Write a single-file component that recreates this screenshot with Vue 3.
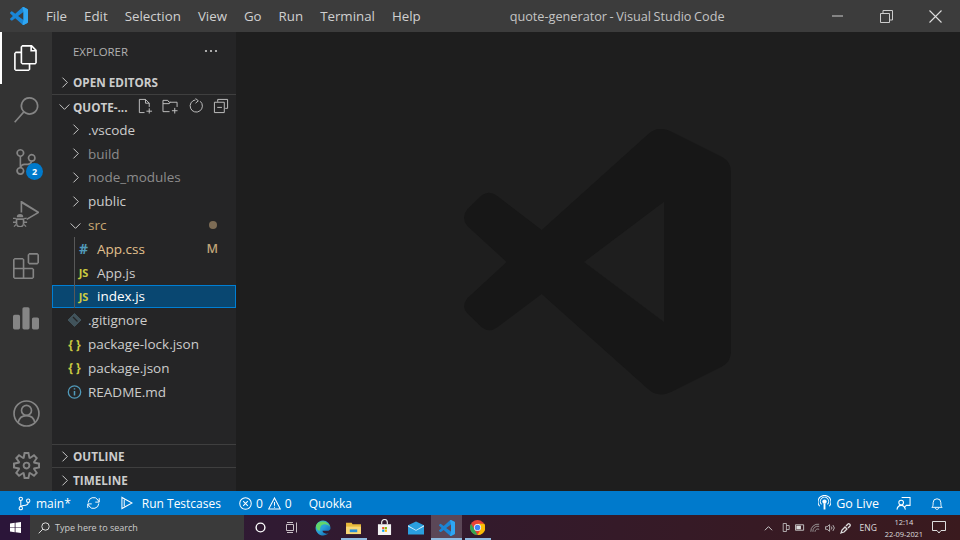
<script setup>
const menus = ['File','Edit','Selection','View','Go','Run','Terminal','Help']
const logo = 'M625 72Q655 45 695 65L845 140Q873 155 873 185L873 725Q873 755 845 770L695 845Q655 865 625 838L305 552L172 652Q148 670 125 652L82 610Q62 590 82 565L200 456L82 348Q62 322 82 298L125 256Q148 240 172 258L305 360ZM672 275L432 456L672 636Z'
const logoBand = 'M625 72Q655 45 695 65L845 140Q873 155 873 185V725Q873 755 845 770L695 845Q655 865 625 838L672 636V275Z'
const topIcons = [
  { name:'files', active:true, d:'M17.5 0h-9L7 1.5V6H2.5L1 7.5v15.07L2.5 24h12.07L16 22.57V18h4.7l1.3-1.43V4.5L17.5 0zm0 2.12l2.38 2.38H17.5V2.12zm-3 20.38h-12v-15H7v9.07L8.5 18h6v4.5zm6-6h-12v-15H16V6h4.5v10.5z' },
  { name:'search', d:'M15.25 0a8.25 8.25 0 0 0-6.18 13.72L1 22.88l1.12 1 8.05-9.12A8.251 8.251 0 1 0 15.25.01V0zm0 15a6.75 6.75 0 1 1 0-13.5 6.75 6.75 0 0 1 0 13.5z' },
  { name:'scm', badge:'2', d:'M21.007 8.222A3.738 3.738 0 0 0 15.045 5.2a3.737 3.737 0 0 0 1.156 6.583 2.988 2.988 0 0 1-2.668 1.67h-2.99a4.456 4.456 0 0 0-2.989 1.165V7.4a3.737 3.737 0 1 0-1.494 0v9.117a3.776 3.776 0 1 0 1.816.099 2.99 2.99 0 0 1 2.668-1.667h2.99a4.484 4.484 0 0 0 4.223-3.039 3.736 3.736 0 0 0 3.25-3.687zM4.565 3.738a2.242 2.242 0 1 1 4.484 0 2.242 2.242 0 0 1-4.484 0zm4.484 16.441a2.242 2.242 0 1 1-4.484 0 2.242 2.242 0 0 1 4.484 0zm8.221-9.715a2.242 2.242 0 1 1 0-4.485 2.242 2.242 0 0 1 0 4.485z' },
  { name:'debug', d:'M7 0h1.200L24 10v1L13 17.500l-.8-1.200L22 10.500 8.500 2.500V10.500H7zM2.500 16h8v4.500a4 4 0 0 1-8 0zM4 17.500v3a2.500 2.500 0 0 0 5 0v-3zM3.500 15a3 3 0 0 1 6 0zM0 15.500h2.500v1.200H0zM10.500 15.500H13v1.200h-2.500zM0 19h2.500v1.200H0zM10.500 19H13v1.200h-2.500zM.5 23.200l2-2 .8.8-2 2zM12.500 23.200l-2-2-.8.8 2 2z' },
  { name:'ext', d:'M13.5 1.5L15 0h7.5L24 1.5V9l-1.5 1.5H15L13.5 9V1.5zm1.5 0V9h7.5V1.5H15zM0 15V6l1.5-1.5H9L10.5 6v7.5H18l1.5 1.5v7.5L18 24H1.5L0 22.5V15zm9-1.5V6H1.5v7.5H9zM9 15H1.5v7.5H9V15zm1.5 7.5H18V15h-7.5v7.5z' },
  { name:'charts', d:'M1.500 9h3.500a1.500 1.500 0 0 1 1.500 1.500V21a1.500 1.500 0 0 1-1.500 1.500H1.500A1.500 1.500 0 0 1 0 21V10.500A1.500 1.500 0 0 1 1.500 9zM10.200 2h3.600a1.500 1.500 0 0 1 1.500 1.500V21a1.500 1.500 0 0 1-1.500 1.500h-3.600A1.500 1.500 0 0 1 8.700 21V3.500A1.500 1.500 0 0 1 10.200 2zM19 11.500h3.500a1.500 1.500 0 0 1 1.500 1.500v8a1.500 1.500 0 0 1-1.500 1.500H19a1.500 1.500 0 0 1-1.500-1.500v-8a1.500 1.500 0 0 1 1.500-1.500z' },
]
const gear = 'M19.85 8.75l4.15.83v4.84l-4.15.83 2.35 3.52-3.43 3.43-3.52-2.35-.83 4.15H9.58l-.83-4.15-3.52 2.35-3.43-3.43 2.35-3.52L0 14.42V9.58l4.15-.83L1.8 5.23 5.23 1.8l3.52 2.35L9.58 0h4.84l.83 4.15 3.52-2.35 3.43 3.43-2.35 3.52zm-1.57 5.07l4-.81v-2l-4-.81-.54-1.3 2.29-3.43-1.43-1.43-3.43 2.29-1.3-.54-.81-4h-2l-.81 4-1.3.54-3.43-2.29-1.43 1.43L6.38 8.9l-.54 1.3-4 .81v2l4 .81.54 1.3-2.29 3.43 1.43 1.43 3.43-2.29 1.3.54.81 4h2l.81-4 1.3-.54 3.43 2.29 1.43-1.43-2.29-3.43.54-1.3zm-8.186-4.672A3.43 3.43 0 0 1 12 8.57 3.44 3.44 0 0 1 15.43 12a3.43 3.43 0 1 1-5.336-2.852zm.956 4.274c.281.188.612.288.95.288A1.7 1.7 0 0 0 13.71 12a1.71 1.71 0 1 0-2.66 1.422z'
const tree = [
  { label:'.vscode', kind:'closed', cls:'' },
  { label:'build', kind:'closed', cls:'dim' },
  { label:'node_modules', kind:'closed', cls:'dim' },
  { label:'public', kind:'closed', cls:'' },
  { label:'src', kind:'open', cls:'mod', dot:true },
  { label:'App.css', kind:'child', icon:'#', iconCls:'hash', cls:'modfile', status:'M' },
  { label:'App.js', kind:'child', icon:'JS', iconCls:'js', cls:'' },
  { label:'index.js', kind:'child', icon:'JS', iconCls:'js', cls:'sel' },
  { label:'.gitignore', kind:'git', cls:'' },
  { label:'package-lock.json', kind:'file', icon:'{ }', iconCls:'json', cls:'' },
  { label:'package.json', kind:'file', icon:'{ }', iconCls:'json', cls:'' },
  { label:'README.md', kind:'info', cls:'' },
]
const hasChevron = k => k === 'closed' || k === 'open'
</script>

<template>
  <div class="app">
    <header class="titlebar">
      <svg class="vs-logo" viewBox="72 57 801 798"><path :d="logo" fill="#1a86d6" fill-rule="evenodd"/><path :d="logoBand" fill="#2fa6f2"/></svg>
      <nav class="menu"><span v-for="m in menus" :key="m" class="menu-item">{{ m }}</span></nav>
      <div class="win-title">quote-generator - Visual Studio Code</div>
      <div class="win-ctrls">
        <span class="win-btn"><svg width="12" height="12" viewBox="0 0 12 12"><path d="M0 6h11" stroke="#ccc" fill="none"/></svg></span>
        <span class="win-btn"><svg width="13" height="13" viewBox="0 0 13 13"><path d="M.5 3.500h9v9h-9zM3 3.500V.5h9.500v9.500H9.500" stroke="#ccc" fill="none"/></svg></span>
        <span class="win-btn"><svg width="13" height="13" viewBox="0 0 13 13"><path d="M.5.5l12 12M12.500.5l-12 12" stroke="#ddd" fill="none" stroke-width="1.100"/></svg></span>
      </div>
    </header>

    <div class="workbench">
      <aside class="activity">
        <div v-for="i in topIcons" :key="i.name" class="act" :class="{ active: i.active }">
          <svg width="26" height="26" viewBox="0 0 24 24"><path :d="i.d" fill="currentColor" fill-rule="evenodd"/></svg>
          <span v-if="i.badge" class="badge">{{ i.badge }}</span>
        </div>
        <div class="act-spacer"></div>
        <div class="act">
          <svg width="27" height="27" viewBox="0 0 26 26" fill="none" stroke="currentColor" stroke-width="1.600"><circle cx="13" cy="13" r="12"/><circle cx="13" cy="10" r="4.800"/><path d="M5 21.500c1-4.500 4-6.500 8-6.500s7 2 8 6.500"/></svg>
        </div>
        <div class="act">
          <svg width="27" height="27" viewBox="0 0 24 24"><path :d="gear" fill="currentColor" fill-rule="evenodd"/></svg>
        </div>
      </aside>

      <section class="sidebar">
        <div class="side-head">
          <span>EXPLORER</span>
          <svg width="14" height="4" viewBox="0 0 14 4" fill="#ccc"><circle cx="2" cy="2" r="1.100"/><circle cx="7" cy="2" r="1.100"/><circle cx="12" cy="2" r="1.100"/></svg>
        </div>
        <div class="sec">
          <svg class="chev" viewBox="0 0 16 16"><path d="M5.500 2l6 6-6 6"/></svg>
          <span>OPEN EDITORS</span>
        </div>
        <div class="sec line">
          <svg class="chev" viewBox="0 0 16 16"><path d="M2 5.500l6 6 6-6"/></svg>
          <span class="proj">QUOTE-...</span>
          <span class="tools">
            <svg width="16" height="16" viewBox="0 0 17 17"><path d="M8 15.500H2.500v-14H9l4 4v4M9 1.500v4h4M13 11v5.500M10 14h6"/></svg>
            <svg width="17" height="16" viewBox="0 0 17 17"><path d="M7.500 14.500H.5v-12h5l1.500 2h8.500v5M.5 6h6.500l1.500-1.500M13 10.500v6M10 13.500h6"/></svg>
            <svg width="16" height="16" viewBox="0 0 17 17"><path d="M13 3.500a6.500 6.500 0 1 1-5-1.500M8 .5l3 2.500-3 2.500"/></svg>
            <svg width="16" height="16" viewBox="0 0 17 17"><path d="M5 4V1.500h10.500V11H13M1.500 4.500H12v11H1.500zM4.500 10h5"/></svg>
          </span>
        </div>
        <div class="tree">
          <div v-for="r in tree" :key="r.label" class="row" :class="[r.cls, r.kind]">
            <svg v-if="hasChevron(r.kind)" class="chev small" viewBox="0 0 16 16">
              <path :d="r.kind === 'open' ? 'M2 5.500l6 6 6-6' : 'M5.500 2l6 6-6 6'"/>
            </svg>
            <span v-if="r.kind === 'child' || r.kind === 'file'" class="ficon" :class="r.iconCls">{{ r.icon }}</span>
            <svg v-if="r.kind === 'git'" class="gitic" width="14" height="14" viewBox="0 0 14 14"><path d="M7 .5L13.500 7 7 13.500.5 7z" fill="#41535b" stroke="#41535b"/><path d="M5.500 4l4.500 4.500" stroke="#252526" stroke-width="1.300"/></svg>
            <svg v-if="r.kind === 'info'" class="infoic" width="14" height="14" viewBox="0 0 14 14" fill="none" stroke="#519aba" stroke-width="1.300"><circle cx="7" cy="7" r="6.200"/><path d="M7 6v4.500M7 3.200v1.400" stroke-width="1.500"/></svg>
            <span class="lbl">{{ r.label }}</span>
            <span v-if="r.dot" class="dot"></span>
            <span v-if="r.status" class="status">{{ r.status }}</span>
          </div>
          <span class="guide"></span>
        </div>
        <div class="sec line bottom">
          <svg class="chev" viewBox="0 0 16 16"><path d="M5.500 2l6 6-6 6"/></svg><span>OUTLINE</span>
        </div>
        <div class="sec line last">
          <svg class="chev" viewBox="0 0 16 16"><path d="M5.500 2l6 6-6 6"/></svg><span>TIMELINE</span>
        </div>
      </section>

      <main class="editor">
        <svg class="watermark" viewBox="72 57 801 798"><path :d="logo" fill="#171717" fill-rule="evenodd"/></svg>
      </main>
    </div>

    <footer class="statusbar">
      <div class="st-left">
        <span class="st branch"><svg width="13" height="15" viewBox="0 0 14 15" class="ic"><circle cx="3" cy="2.500" r="1.800"/><circle cx="3" cy="12.500" r="1.800"/><circle cx="11" cy="4.500" r="1.800"/><path d="M3 4.300v6.400M11 6.300c0 3-3 3.200-5 3.400-1.500.2-3 .7-3 1.800"/></svg>main*</span>
        <span class="st sync"><svg width="15" height="14" viewBox="0 0 17 15" class="ic"><path d="M2.500 7a6 6 0 0 1 11-3l1 2M14.500 8a6 6 0 0 1-11 3l-1-2M15 2v4.500h-4.500M2 13V8.500h4.500"/></svg></span>
        <span class="st run"><svg width="12" height="14" viewBox="0 0 13 14" class="ic"><path d="M1 1v12l11-6zM3.500 3.500v7"/></svg>Run Testcases</span>
        <span class="st problems"><svg width="13" height="13" viewBox="0 0 14 14" class="ic"><circle cx="7" cy="7" r="6.200"/><path d="M4.500 4.500l5 5M9.500 4.500l-5 5"/></svg>0<svg width="13" height="13" viewBox="0 0 14 14" class="ic warn"><path d="M7 1l6.300 12H.7z"/><path d="M7 5.500v4M7 10.500v1.200"/></svg>0</span>
        <span class="st quokka">Quokka</span>
      </div>
      <div class="st-right">
        <span class="st golive"><svg width="13" height="16" viewBox="0 0 14 16" class="ic"><circle cx="7" cy="6.500" r="1.800" fill="#fff"/><path d="M7 8.500V15" stroke-width="2"/><path d="M3.800 9.500a4.500 4.500 0 1 1 6.400 0M1.800 11.500a7 7 0 1 1 10.400 0"/></svg>Go Live</span>
        <span class="st feedback"><svg width="15" height="15" viewBox="0 0 16 15" class="ic"><path d="M6 1h9v8.500H11l-2 2"/><circle cx="5.500" cy="6.500" r="2.500"/><path d="M1 14c.5-3 2-4.500 4.500-4.500S9.500 11 10 14"/></svg></span>
        <span class="st bell"><svg width="12" height="15" viewBox="0 0 14 16" class="ic"><path d="M1 12.500c1.500-1 1.500-3 1.500-5.500a4.500 4.500 0 0 1 9 0c0 2.500 0 4.500 1.500 5.500zM5 13c0 2.500 4 2.500 4 0"/></svg></span>
      </div>
    </footer>

    <div class="taskbar">
      <div class="start"><svg width="11" height="11" viewBox="0 0 14 14" fill="#fff"><path d="M0 2l6-.9V6.600H0zM7 1l7-1v6.600H7zM0 7.400h6V13l-6-.9zM7 7.400h7V14l-7-1z"/></svg></div>
      <div class="searchbox">
        <svg width="12" height="12" viewBox="0 0 12 12" fill="none" stroke="#ddd"><circle cx="7.500" cy="4.500" r="3.700"/><path d="M4.800 7.200L.7 11.300"/></svg>
        <span>Type here to search</span>
      </div>
      <div class="tb"><svg width="11" height="11" viewBox="0 0 12 12" fill="none" stroke="#fff" stroke-width="1.500"><circle cx="6" cy="6" r="4.800"/></svg></div>
      <div class="tb"><svg width="12" height="11" viewBox="0 0 12 11" fill="none" stroke="#c9c0c6"><path d="M.5 2.500h7v6h-7zM1 .5h6M1 10.500h6M10.500.5v10"/></svg></div>
      <div class="tb"><svg width="16" height="16" viewBox="0 0 17 17"><defs><linearGradient id="eg" x1="0" y1="0" x2="1" y2="1"><stop offset="0" stop-color="#35c1c8"/><stop offset=".5" stop-color="#2a9fd8"/><stop offset="1" stop-color="#0b5fa8"/></linearGradient></defs><path d="M8.500.5a8 8 0 0 1 8 8c0 2-1.500 3-3.500 3H8c0 1.800 2 3 4 3 1 0 2-.2 2.500-.6A8 8 0 1 1 8.500.5z" fill="url(#eg)"/><path d="M1 6c1-3 4-4.500 7-4.500 4 0 7 2 8.300 6-1.300-2-4-3-6-3-4 0-5 3-4.800 7C3 11.500 1.300 9 1 6z" fill="#62d66a"/></svg></div>
      <div class="tb run-ind"><svg width="15" height="14" viewBox="0 0 16 15"><path d="M0 2h6l1 1.500h9V14H0z" fill="#e8b93b"/><path d="M0 6h16v8H0z" fill="#f8d775"/><path d="M4 9h8v3H4z" fill="#2a8fd8"/></svg></div>
      <div class="tb"><svg width="15" height="17" viewBox="0 0 16 17"><path d="M1 5h14v11.500H1z" fill="#f3f3f3"/><path d="M5 5V3a3 3 0 0 1 6 0v2" fill="none" stroke="#f3f3f3" stroke-width="1.200"/><path d="M5.500 8h2.300v2.300H5.500z" fill="#f25022"/><path d="M8.300 8h2.300v2.300H8.300z" fill="#7fba00"/><path d="M5.500 10.800h2.300v2.300H5.500z" fill="#00a4ef"/><path d="M8.300 10.800h2.300v2.300H8.300z" fill="#ffb900"/></svg></div>
      <div class="tb"><svg width="16" height="14" viewBox="0 0 17 14"><path d="M0 4l8.500-4L17 4v10H0z" fill="#2a9fe0"/><path d="M0 4l8.500 5L17 4v1.500L8.500 10 0 5.500z" fill="#d8f0fc"/></svg></div>
      <div class="tb current"><svg width="16" height="16" viewBox="72 57 801 798"><path :d="logo" fill="#1a86d6" fill-rule="evenodd"/><path :d="logoBand" fill="#2fa6f2"/></svg></div>
      <div class="tb run-ind"><svg width="15" height="15" viewBox="0 0 16 16"><circle cx="8" cy="8" r="8" fill="#ea4335"/><path d="M8 16A8 8 0 0 1 1.100 4L5 10.500l3 5.500z" fill="#34a853"/><path d="M8 4h7.300A8 8 0 0 1 8 16l3.300-6z" fill="#fbbc05"/><circle cx="8" cy="8" r="3.800" fill="#fff"/><circle cx="8" cy="8" r="3" fill="#4285f4"/></svg></div>
      <div class="tray">
        <svg class="tray-chev" width="9" height="6" viewBox="0 0 10 6" fill="none" stroke="#ddd"><path d="M1 5.500l4-4 4 4"/></svg>
        <svg width="8" height="11" viewBox="0 0 10 11" fill="none" stroke="#ccc"><path d="M1.500.5h4v10h-4zM5.500 3h3.500v5H5.500"/></svg>
        <svg width="10" height="7" viewBox="0 0 11 7"><path d="M.5.5h9v6h-9z" fill="none" stroke="#ccc"/><path d="M1.500 1.500h5v4h-5z" fill="#ddd"/></svg>
        <svg width="10" height="10" viewBox="0 0 12 10" fill="none" stroke="#aaa"><path d="M1 9.500a8.500 8.500 0 0 1 10-9M3.500 9.500a6 6 0 0 1 7.500-6.500M6 9.500a3.500 3.500 0 0 1 5-3"/></svg>
        <svg width="10" height="10" viewBox="0 0 12 10" fill="none" stroke="#ccc"><path d="M.5 3.500h2L5.500 1v8l-3-2.500h-2zM7.500 3.200a2.500 2.500 0 0 1 0 3.600M9.500 1.500a5 5 0 0 1 0 7"/></svg>
        <svg width="12" height="12" viewBox="0 0 12 12" fill="none" stroke="#ddd" stroke-width="1.300"><path d="M1 11l3-1 3-3-2-2-3 3zM6 4l2-2c1-1 3 1 2 2L8 6M5 5l2 2"/></svg>
        <span class="eng">ENG</span>
        <span class="clock"><span>12:14</span><span>22-09-2021</span></span>
        <svg class="notif" width="14" height="13" viewBox="0 0 14 13" fill="none" stroke="#ddd"><path d="M.5.5h13v9h-4.500L7 12 5 9.500H.5z"/></svg>
      </div>
    </div>
  </div>
</template>

<style scoped>
.app { width: 960px; height: 540px; display: flex; flex-direction: column; overflow: hidden; font-family: "Open Sans", "Noto Sans", sans-serif; color: #ccc; }

.titlebar { height: 32px; flex: none; background: #3c3c3c; display: flex; align-items: center; font-size: 13.300px; }
.vs-logo { width: 18px; height: 18px; margin-left: 10px; flex: none; }
.menu { display: flex; margin-left: 9.500px; }
.menu-item { padding: 0 8.500px; color: #d0d0d0; }
.win-title { flex: 1; text-align: center; color: #c4c4c4; font-size: 12.700px; word-spacing: -.75px; padding-right: 8px; }
.win-ctrls { display: flex; }
.win-btn { width: 49px; height: 32px; display: flex; align-items: center; justify-content: center; }

.workbench { flex: 1; display: flex; min-height: 0; }

.activity { width: 52px; flex: none; background: #333; display: flex; flex-direction: column; color: #858585; }
.act { height: 52px; flex: none; display: flex; align-items: center; justify-content: center; position: relative; }
.act.active { color: #fff; box-shadow: inset 2px 0 0 #fff; }
.act-spacer { flex: 1; }
.badge { position: absolute; left: 26px; top: 27px; width: 17px; height: 17px; border-radius: 50%; background: #007acc; color: #fff; font-size: 9px; font-weight: 700; display: flex; align-items: center; justify-content: center; }

.sidebar { width: 184px; flex: none; background: #252526; display: flex; flex-direction: column; font-size: 13.500px; }
.side-head { height: 38px; flex: none; display: flex; align-items: center; justify-content: space-between; padding: 0 18px 0 21px; font-size: 11.400px; color: #b0b0b0; }
.sec { height: 24px; flex: none; display: flex; align-items: center; font-size: 11.700px; font-weight: 700; color: #ccc; box-sizing: border-box; }
.sec.line { border-top: 1px solid #3f3f3f; }
.sec.bottom { margin-top: auto; height: 23px; }
.sec.last { padding-top: 1px; }
.chev { width: 13px; height: 13px; margin: 0 2px 0 6px; fill: none; stroke: #ccc; stroke-width: 1.200; flex: none; }
.chev.small { margin: 0 6px 0 5px; }
.proj { width: 64px; flex: none; }
.tools { display: flex; gap: 9px; margin-top: -1px; }
.tools svg { fill: none; stroke: #c5c5c5; stroke-width: 1; flex: none; }

.tree { position: relative; display: flex; flex-direction: column; }
.row { height: 23.800px; flex: none; display: flex; align-items: center; padding-left: 12px; color: #ccc; position: relative; box-sizing: border-box; white-space: nowrap; }
.row.dim .lbl { color: #8c8c8c; }
.row.mod .lbl { color: #c9a873; }
.row.modfile .lbl { color: #e2c08d; }
.row.child { padding-left: 22px; }
.row.git, .row.file, .row.info { padding-left: 13px; }
.row.sel { background: #094771; outline: 1px solid #007fd4; outline-offset: -1px; color: #fff; }
.row.sel .lbl { color: #fff; }
.ficon { width: 19px; margin-right: 4px; flex: none; text-align: center; font-weight: 700; font-size: 11px; }
.hash { color: #519aba; font-size: 14px; }
.js { color: #cbcb41; }
.json { color: #cbcb41; font-size: 12px; }
.gitic, .infoic { width: 19px; margin-right: 4px; flex: none; }
.dot { width: 8px; height: 8px; border-radius: 50%; background: #7d6c55; position: absolute; right: 19px; top: 8px; }
.status { position: absolute; right: 18px; color: #c0a478; font-weight: 600; font-size: 12.500px; }
.guide { position: absolute; left: 22px; top: 119px; width: 1px; height: 71px; background: #585858; }

.editor { flex: 1; background: #1e1e1e; display: flex; align-items: center; justify-content: center; padding-right: 2px; }
.watermark { width: 267px; height: 266px; }

.statusbar { height: 24px; flex: none; background: #007acc; color: #fff; display: flex; align-items: center; justify-content: space-between; font-size: 12px; }
.st-left, .st-right { display: flex; align-items: center; }
.st { display: flex; align-items: center; white-space: nowrap; }
.ic { fill: none; stroke: #fff; stroke-width: 1.100; flex: none; }
.branch { margin-left: 18px; gap: 5px; }
.sync { margin-left: 15px; }
.run { margin-left: 20px; gap: 9px; }
.problems { margin-left: 18px; gap: 4px; }
.warn { margin-left: 1px; }
.quokka { margin-left: 17px; }
.golive { gap: 5px; font-size: 12.500px; }
.feedback { margin-left: 17px; }
.bell { margin-left: 20px; margin-right: 17px; }

.taskbar { height: 25px; flex: none; background: linear-gradient(90deg, #2c1a3a, #3a1a1e); display: flex; align-items: center; position: relative; }
.start { width: 30px; height: 25px; display: flex; align-items: center; justify-content: center; background: #2b1539; flex: none; }
.searchbox { width: 214px; height: 25px; flex: none; background: #3a3a3a; display: flex; align-items: center; gap: 5px; padding-left: 8px; box-sizing: border-box; font-size: 9px; color: #ccc; }
.tb { width: 31px; height: 25px; flex: none; display: flex; align-items: center; justify-content: center; box-sizing: border-box; }
.searchbox + .tb { margin-left: 1px; }
.run-ind { background: linear-gradient(#8fbbe0, #8fbbe0) center bottom / 26px 2px no-repeat; }
.current { background: rgba(255,255,255,.2); box-shadow: inset 0 -2px 0 #8fbbe0; }
.tray { margin-left: auto; display: flex; align-items: center; gap: 5px; color: #ddd; font-size: 8.500px; }
.tray-chev { margin-right: 4px; }
.eng { margin-left: 3px; }
.clock { display: flex; flex-direction: column; align-items: center; margin-left: 3px; line-height: 12px; font-size: 7.500px; letter-spacing: -.1px; }
.notif { margin: 0 14px 0 4px; }
</style>

<style>
html, body { margin: 0; padding: 0; background: #1e1e1e; overflow: hidden; }
</style>
